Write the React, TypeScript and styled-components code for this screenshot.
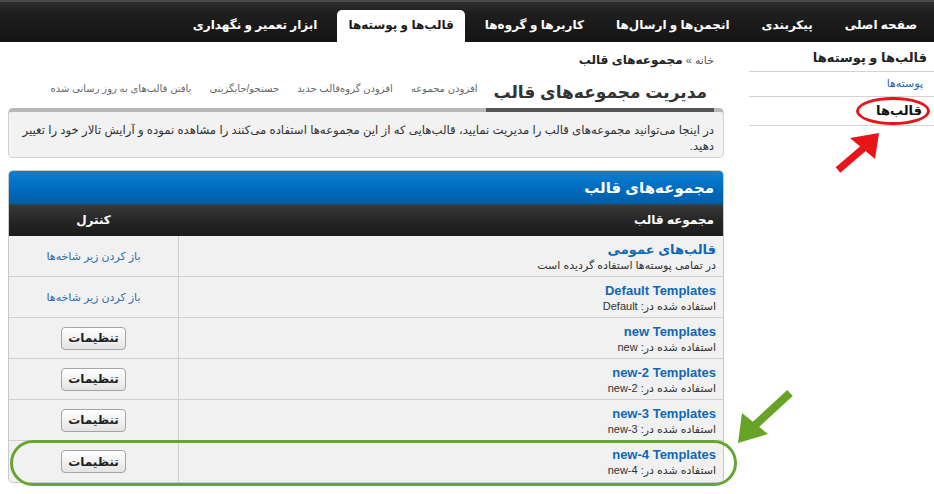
import styled, { createGlobalStyle } from "styled-components";

const FA = `"Liberation Sans", "DejaVu Sans", sans-serif`;

const GlobalStyle = createGlobalStyle`
  html, body {
    margin: 0;
    padding: 0;
    background: #ffffff;
  }
  body {
    font-family: ${FA};
    color: #333333;
  }
  * {
    box-sizing: border-box;
  }
`;

const navItems = [
  { label: "صفحه اصلی" },
  { label: "پیکربندی" },
  { label: "انجمن‌ها و ارسال‌ها" },
  { label: "کاربرها و گروه‌ها" },
  { label: "قالب‌ها و پوسته‌ها", active: true },
  { label: "ابزار تعمیر و نگهداری" },
];

const tabs = [
  "افزودن مجموعه",
  "افزودن گروه‌قالب جدید",
  "جستجو/جایگزینی",
  "یافتن قالب‌های به روز رسانی شده",
];

const sets = [
  { name: "قالب‌های عمومی", note: "در تمامی پوسته‌ها استفاده گردیده است", expand: true },
  { name: "Default Templates", note: "استفاده شده در: Default", expand: true },
  { name: "new Templates", note: "استفاده شده در: new" },
  { name: "new-2 Templates", note: "استفاده شده در: new-2" },
  { name: "new-3 Templates", note: "استفاده شده در: new-3" },
  { name: "new-4 Templates", note: "استفاده شده در: new-4", marked: true },
];

const App = () => {
  return (
    <Page dir="rtl">
      <GlobalStyle />

      <TopBar>
        {navItems.map(item => (
          <NavItem key={item.label} $active={item.active}>{item.label}</NavItem>
        ))}
      </TopBar>

      <Main>
        <Sidebar>
          <SideTitle>قالب‌ها و پوسته‌ها</SideTitle>
          <SideLink>پوسته‌ها</SideLink>
          <SideItem>
            قالب‌ها
            <RedRing />
          </SideItem>
        </Sidebar>

        <Content>
          <Breadcrumb>
            خانه » <b>مجموعه‌های قالب</b>
          </Breadcrumb>

          <TabRow>
            <TitleTab>مدیریت مجموعه‌های قالب</TitleTab>
            {tabs.map(t => <Tab key={t}>{t}</Tab>)}
          </TabRow>

          <Description>
            در اینجا می‌توانید مجموعه‌های قالب را مدیریت نمایید، قالب‌هایی که از این مجموعه‌ها استفاده می‌کنند را مشاهده نموده و آرایش تالار خود را تغییر دهید.
          </Description>

          <Table>
            <Caption>مجموعه‌های قالب</Caption>
            <HeadRow>
              <HeadCell>مجموعه قالب</HeadCell>
              <HeadCell $center>کنترل</HeadCell>
            </HeadRow>

            {sets.map(set => (
              <Row key={set.name}>
                <NameCell>
                  <SetName>{set.name}</SetName>
                  <SetNote>{set.note}</SetNote>
                </NameCell>
                <ControlCell>
                  {set.expand ? (
                    <ExpandLink>باز کردن زیر شاخه‌ها</ExpandLink>
                  ) : (
                    <SettingsButton>تنظیمات</SettingsButton>
                  )}
                </ControlCell>
                {set.marked && <GreenRing />}
              </Row>
            ))}
          </Table>
        </Content>
      </Main>

      <RedArrow viewBox="0 0 60 50" width="60" height="50">
        <line x1="8" y1="45" x2="36" y2="21" stroke="#e8141a" strokeWidth="7" />
        <polygon points="49,8 20,13 45,34" fill="#e8141a" />
      </RedArrow>

      <GreenArrow viewBox="0 0 70 65" width="70" height="65">
        <line x1="60" y1="8" x2="22" y2="43" stroke="#66a326" strokeWidth="8" />
        <polygon points="8,58 12,28 38,49" fill="#66a326" />
      </GreenArrow>
    </Page>
  );
};

const Page = styled.div`
  position: relative;
  width: 934px;
  height: 494px;
  overflow: hidden;
  font-family: ${FA};
`;

const TopBar = styled.div`
  display: flex;
  align-items: flex-end;
  height: 42px;
  padding-right: 1px;
  background: linear-gradient(#2e2e2e, #1e1e1e 30%, #141414);
  border-top: 2px solid #4a4a4a;
`;

const NavItem = styled.div<{ $active?: boolean }>`
  height: 32px;
  line-height: 31px;
  padding: 0 ${p => (p.$active ? "11px" : "16px")};
  margin: 0 ${p => (p.$active ? "4px" : "0")};
  font-size: 12px;
  font-weight: bold;
  white-space: nowrap;
  color: ${p => (p.$active ? "#1a1a1a" : "#ffffff")};
  background: ${p => (p.$active ? "#ffffff" : "transparent")};
  border-radius: 5px 5px 0 0;
`;

const Main = styled.div`
  display: flex;
  align-items: flex-start;
  gap: 25px;
  padding-left: 8px;
`;

const Sidebar = styled.div`
  width: 185px;
  flex-shrink: 0;
`;

const SideTitle = styled.div`
  height: 30px;
  padding: 8px 7px 0 0;
  font-size: 13px;
  font-weight: bold;
  color: #222222;
  border-bottom: 1px solid #d4d4d4;
`;

const SideLink = styled.div`
  height: 25px;
  padding: 5px 11px 0 0;
  font-size: 11px;
  color: #1c64b4;
  border-bottom: 1px solid #d4d4d4;
`;

const SideItem = styled.div`
  position: relative;
  height: 29px;
  padding: 6px 12px 0 0;
  font-size: 13px;
  font-weight: bold;
  color: #111111;
  border-bottom: 1px solid #d4d4d4;
`;

const RedRing = styled.span`
  position: absolute;
  top: 0;
  right: 4px;
  width: 74px;
  height: 28px;
  border: 3px solid #e4161c;
  border-radius: 50%;
`;

const Content = styled.div`
  width: 716px;
  flex-shrink: 0;
`;

const Breadcrumb = styled.div`
  margin: 10px 10px 0 0;
  line-height: 16px;
  font-size: 11px;
  color: #555555;

  b {
    color: #222222;
    font-size: 12px;
  }
`;

const TabRow = styled.div`
  display: flex;
  align-items: flex-end;
  margin-top: 11px;
`;

const TitleTab = styled.div`
  position: relative;
  margin: 0 10px -4px 0;
  padding: 0 7px 1px;
  line-height: 28px;
  font-size: 17px;
  font-weight: bold;
  color: #333333;
  white-space: nowrap;
  border-bottom: 4px solid #555555;
`;

const Tab = styled.div`
  padding: 0 9px 11px;
  line-height: 16px;
  font-size: 10px;
  color: #666666;
  white-space: nowrap;
`;

const Description = styled.div`
  padding: 10px 9px 3px 5px;
  line-height: 16px;
  font-size: 11.7px;
  color: #333333;
  background: #f2f2f2;
  border: 1px solid #d0d0d0;
  border-top: 4px solid #b8b8b8;
  border-radius: 5px;
`;

const Table = styled.div`
  margin-top: 12px;
  border: 1px solid #c9c9c9;
  border-radius: 5px;
  background: #f1f1f1;
`;

const Caption = styled.div`
  height: 34px;
  padding: 0 9px;
  line-height: 33px;
  font-size: 15px;
  font-weight: bold;
  color: #ffffff;
  background: linear-gradient(#0a80d6, #006bbd 55%, #005da6);
  border-bottom: 1px solid #1d4a5a;
  border-radius: 4px 4px 0 0;
`;

const HeadRow = styled.div`
  display: grid;
  grid-template-columns: 1fr 169px;
  height: 31px;
  background: linear-gradient(#393939, #262626 50%, #1b1b1b);
`;

const HeadCell = styled.div<{ $center?: boolean }>`
  padding: 0 ${p => (p.$center ? "0" : "9px")};
  line-height: 31px;
  font-size: 12px;
  font-weight: bold;
  color: #ffffff;
  text-align: ${p => (p.$center ? "center" : "right")};
`;

const Row = styled.div`
  position: relative;
  display: grid;
  grid-template-columns: 1fr 169px;
  height: 41px;
  border-bottom: 1px solid #cfcfcf;

  &:last-child {
    border-bottom: none;
    border-radius: 0 0 5px 5px;
  }
`;

const NameCell = styled.div`
  padding: 5px 7px 0;
  border-left: 1px solid #cfcfcf;
`;

const SetName = styled.div`
  line-height: 17px;
  font-size: 13px;
  font-weight: bold;
  color: #0f68b5;
`;

const SetNote = styled.div`
  line-height: 14px;
  font-size: 11px;
  color: #333333;
`;

const ControlCell = styled.div`
  display: flex;
  align-items: center;
  justify-content: center;
`;

const ExpandLink = styled.span`
  font-size: 11px;
  color: #2a6db3;
`;

const SettingsButton = styled.button`
  height: 23px;
  padding: 0 6px;
  font-family: ${FA};
  font-size: 12px;
  font-weight: bold;
  color: #222222;
  background: linear-gradient(#ffffff, #e4e4e4);
  border: 1px solid #a4a4a4;
  border-radius: 4px;
`;

const GreenRing = styled.span`
  position: absolute;
  top: -1px;
  bottom: -4px;
  left: 1px;
  right: -14px;
  border: 3px solid #68a431;
  border-radius: 23px;
  pointer-events: none;
`;

const RedArrow = styled.svg`
  position: absolute;
  left: 830px;
  top: 125px;
`;

const GreenArrow = styled.svg`
  position: absolute;
  left: 730px;
  top: 385px;
`;

export default App;
